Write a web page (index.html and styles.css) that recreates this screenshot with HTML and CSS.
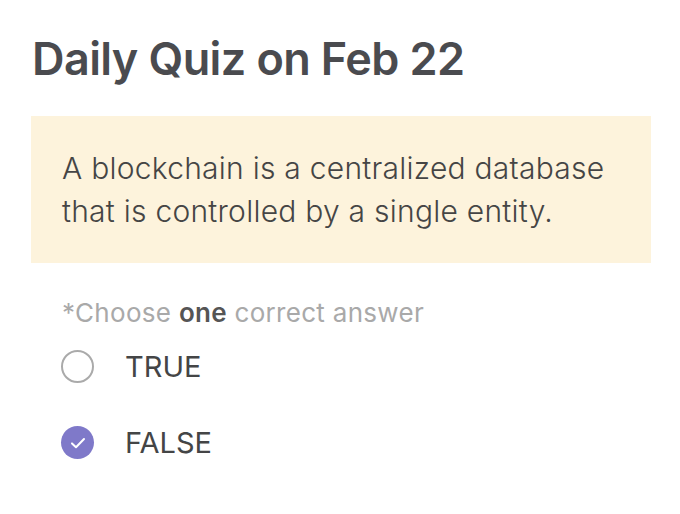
FILE: index.html
```html
<!DOCTYPE html>
<html>
<head>
<meta charset="utf-8">
<link rel="stylesheet" href="styles.css">
</head>
<body>
<div class="page">
  <h1 class="title">Daily Quiz on Feb 22</h1>
  <div class="question">
    <p>A blockchain is a centralized database that is controlled by a single entity.</p>
  </div>
  <p class="hint">*Choose <b>one</b> correct answer</p>
  <div class="options">
    <div class="option">
      <span class="radio"></span>
      <span class="label">TRUE</span>
    </div>
    <div class="option">
      <span class="radio checked">
        <svg width="20" height="20" viewBox="0 0 20 20"><path d="M4 10.4 L8 14.2 L16 6" fill="none" stroke="#fff" stroke-width="2" stroke-linecap="round" stroke-linejoin="round"/></svg>
      </span>
      <span class="label">FALSE</span>
    </div>
  </div>
</div>
</body>
</html>
```
FILE: styles.css
```css
html, body {
  margin: 0;
  padding: 0;
  background: #ffffff;
}
body {
  font-family: "Inter", "Noto Sans", sans-serif;
}
.page {
  padding: 30px 30px 0 31px;
}
.title {
  margin: 0 0 0 1px;
  font-size: 45px;
  font-weight: 600;
  color: #4a4b4f;
  line-height: 58px;
  letter-spacing: -0.6px;
}
.question {
  margin-top: 28px;
  width: 559px;
  background: #fdf3dc;
  padding: 31px 30px 30px 31px;
}
.question p {
  margin: 0;
  font-size: 30px;
  font-weight: 300;
  line-height: 43px;
  color: #454545;
  letter-spacing: 0.25px;
}
.hint {
  margin: 30px 0 0 31px;
  font-size: 26px;
  color: #a9a9a9;
  line-height: 40px;
  letter-spacing: 0.3px;
}
.hint b {
  color: #555;
  font-weight: 600;
}
.options {
  margin-left: 30px;
  display: flex;
  flex-direction: column;
  gap: 43px;
  margin-top: 17px;
}
.option {
  display: flex;
  align-items: center;
  gap: 31px;
  height: 33px;
}
.radio {
  box-sizing: border-box;
  width: 33px;
  height: 33px;
  border-radius: 50%;
  border: 2px solid #aaaaaa;
  display: flex;
  align-items: center;
  justify-content: center;
}
.radio.checked {
  border: none;
  background: #7f79c9;
}
.label {
  font-size: 29px;
  color: #444546;
  font-weight: 400;
}
```
